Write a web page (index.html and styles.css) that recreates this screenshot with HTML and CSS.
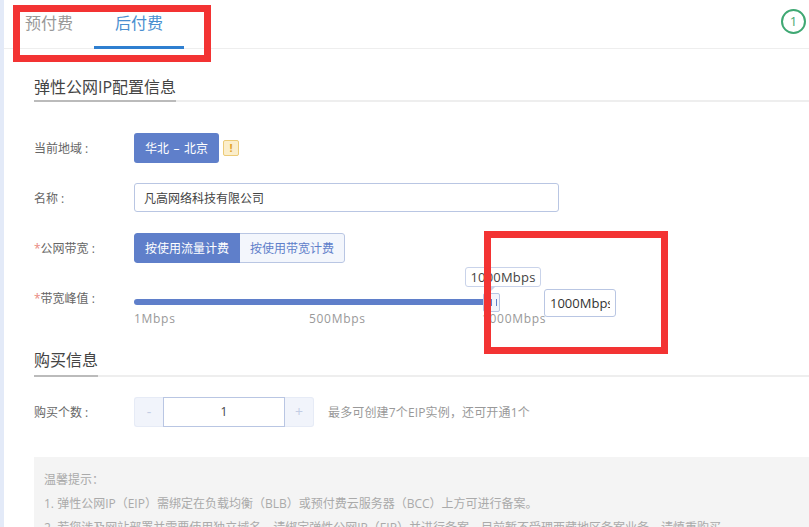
FILE: index.html
```html
<!DOCTYPE html>
<html lang="zh-CN">
<head>
<meta charset="utf-8">
<title>弹性公网IP</title>
<link rel="stylesheet" href="styles.css">
</head>
<body>
<main class="page">
  <header class="tabs">
    <a class="tab tab-first">预付费</a>
    <a class="tab tab-active">后付费</a>
    <span class="step">1</span>
  </header>
  <div class="content">
    <h2 class="section-title"><span>弹性公网IP配置信息</span></h2>
    <div class="row row-region">
      <label class="label">当前地域 :</label>
      <span class="btn btn-primary region">华北 – 北京</span>
      <span class="warn">!</span>
    </div>
    <div class="row row-name">
      <label class="label">名称 :</label>
      <div class="input name-input">凡高网络科技有限公司</div>
    </div>
    <div class="row row-billing">
      <label class="label"><i class="star">*</i>公网带宽 :</label>
      <div class="btn-group">
        <span class="btn btn-primary">按使用流量计费</span>
        <span class="btn btn-plain">按使用带宽计费</span>
      </div>
    </div>
    <div class="row row-slider">
      <label class="label"><i class="star">*</i>带宽峰值 :</label>
      <div class="slider">
        <div class="track"></div>
        <span class="tooltip">1000Mbps</span>
        <span class="tooltip-arrow"></span>
        <span class="thumb"></span>
        <div class="marks">
          <span>1Mbps</span><span>500Mbps</span><span>1000Mbps</span>
        </div>
      </div>
      <div class="input slider-input"><span>1000Mbps</span></div>
    </div>
    <h2 class="section-title title-buy"><span>购买信息</span></h2>
    <div class="row row-qty">
      <label class="label">购买个数 :</label>
      <div class="stepper">
        <span class="step-btn step-left">-</span>
        <span class="step-value">1</span>
        <span class="step-btn step-right">+</span>
      </div>
      <span class="hint">最多可创建7个EIP实例，还可开通1个</span>
    </div>
    <section class="notice">
      <p>温馨提示：</p>
      <p>1. 弹性公网IP（EIP）需绑定在负载均衡（BLB）或预付费云服务器（BCC）上方可进行备案。</p>
      <p>2. 若您涉及网站部署并需要使用独立域名，请绑定弹性公网IP（EIP）并进行备案，目前暂不受理西藏地区备案业务，请慎重购买。</p>
    </section>
  </div>
</main>
<div class="mark mark-tabs"></div>
<div class="mark mark-slider"></div>
</body>
</html>
```

FILE: styles.css
```css
* { box-sizing: border-box; }
html, body { margin: 0; height: 527px; overflow: hidden; background: #fff; }
body {
  font-family: "Open Sans", "Noto Sans CJK SC", sans-serif;
  font-size: 12px;
  color: #555;
  position: relative;
  width: 809px;
}
.page { border-left: 4px solid #e3eaf8; height: 527px; overflow: hidden; }
.tabs {
  height: 49px;
  border-bottom: 1px solid #eeeeee;
  display: flex;
  gap: 21px;
  padding-left: 21px;
  position: relative;
}
.tab {
  width: 90px;
  height: 49px;
  padding-top: 11px;
  font-size: 16px;
  line-height: 24px;
  text-align: center;
  color: #999;
}
.tab-first { width: 48px; }
.tab-active {
  color: #4a8fd0;
  border-bottom: 3px solid #2f7fd0;
}
.step {
  position: absolute;
  right: 3px;
  top: 9px;
  width: 25px;
  height: 25px;
  border: 2px solid #3fa873;
  border-radius: 50%;
  color: #3fa873;
  font-size: 13px;
  line-height: 21px;
  text-align: center;
}
.content { padding-left: 30px; }
.section-title {
  margin: 26px 0 0;
  height: 27px;
  font-size: 16px;
  font-weight: 400;
  line-height: 24px;
  color: #444;
  border-bottom: 2px solid #eeeeee;
  white-space: nowrap;
}
.section-title span {
  display: inline-block;
  height: 27px;
  border-bottom: 2px solid #bbbbbb;
}
.title-buy { margin-top: 0; height: 29px; }
.title-buy span { height: 29px; }
.row { display: flex; align-items: center; }
.label { width: 100px; color: #666; flex: none; font-size: 12px; white-space: nowrap; }
.star { color: #e98a80; font-style: normal; }
.row-region { margin-top: 31px; height: 30px; }
.row-name { margin-top: 20px; height: 30px; }
.row-billing { margin-top: 20px; height: 30px; }
.row-slider { margin-top: 20px; height: 65px; align-items: flex-start; }
.row-slider .label { padding-top: 6px; }
.btn {
  display: inline-flex;
  align-items: center;
  justify-content: center;
  height: 30px;
  font-size: 12px;
}
.btn-primary { background: #5f7fca; color: #fff; }
.region { width: 85px; border-radius: 3px; word-spacing: 1.5px; }
.warn {
  width: 16px;
  height: 16px;
  margin-left: 4px;
  background: #fbeecb;
  border: 1px solid #eccb78;
  border-radius: 2px;
  color: #e2a32c;
  font-weight: 700;
  font-size: 11px;
  line-height: 14px;
  text-align: center;
}
.input {
  height: 29px;
  border: 1px solid #b9c6e3;
  border-radius: 3px;
  background: #fff;
  color: #444;
  padding-left: 9px;
  display: flex;
  align-items: center;
}
.name-input { width: 425px; align-self: flex-start; }
.btn-group { display: flex; border-radius: 3px; overflow: hidden; }
.btn-group .btn { width: 105px; }
.btn-group .btn-plain {
  background: #f3f6fc;
  color: #5f7fca;
  border: 1px solid #b9c6e3;
  border-left: 0;
  border-radius: 0 3px 3px 0;
}
.btn-group .btn-primary { width: 106px; border-radius: 3px 0 0 3px; }
.slider { position: relative; width: 354px; height: 60px; flex: none; }
.track {
  position: absolute;
  left: 0;
  top: 16px;
  width: 354px;
  height: 6px;
  background: #5f7fca;
  border-radius: 3px;
}
.thumb {
  position: absolute;
  left: 349px;
  top: 10px;
  width: 17px;
  height: 19px;
  background: #f3f6fc;
  border: 1px solid #b9c6e3;
  border-radius: 2px;
}
.thumb::after {
  content: "";
  position: absolute;
  left: 7px;
  top: 5px;
  width: 4px;
  height: 7px;
  border-left: 1px solid #5f7fca;
  border-right: 1px solid #5f7fca;
}
.tooltip {
  position: absolute;
  left: 331px;
  top: -16px;
  width: 76px;
  height: 20px;
  background: #fff;
  border: 1px solid #c9d3ea;
  border-radius: 3px;
  font-size: 13px;
  line-height: 18px;
  text-align: center;
  color: #444;
  letter-spacing: .2px;
}
.tooltip-arrow {
  position: absolute;
  left: 351px;
  top: 4px;
  border: 5px solid transparent;
  border-top-color: #c9d3ea;
  border-bottom: 0;
}
.marks {
  position: absolute;
  left: 0;
  top: 28px;
  color: #999;
  font-size: 12px;
  line-height: 16px;
  letter-spacing: .7px;
  display: grid;
  grid-template-columns: 175px 173px auto;
  white-space: nowrap;
}
.slider-input {
  width: 72px;
  height: 28px;
  margin-left: 56px;
  margin-top: 6px;
  font-size: 13px;
  padding: 0 0 0 5px;
  overflow: hidden;
  white-space: nowrap;
  color: #333;
}
.slider-input span { display: block; width: 60px; overflow: hidden; }
.row-qty { margin-top: 20px; height: 30px; }
.stepper { display: flex; height: 30px; width: 180px; flex: none; }
.step-btn {
  width: 29px;
  background: #f1f4fb;
  color: #c3cde4;
  font-size: 14px;
  line-height: 28px;
  text-align: center;
  border: 1px solid #e6ebf6;
}
.step-left { border-radius: 3px 0 0 3px; border-right: 0; }
.step-right { border-radius: 0 3px 3px 0; border-left: 0; }
.step-value {
  width: 122px;
  border: 1px solid #b9c6e3;
  line-height: 28px;
  text-align: center;
  color: #444;
}
.hint { margin-left: 14px; color: #999; white-space: nowrap; letter-spacing: .15px; }
.notice {
  margin-top: 30px;
  height: 100px;
  background: #f4f4f4;
  padding: 11px 0 0 10px;
  color: #aaa;
  font-size: 12px;
  white-space: nowrap;
  overflow: hidden;
}
.notice p { margin: 0; height: 24px; line-height: 24px; }
.mark { position: absolute; border: 7px solid #f33333; pointer-events: none; }
.mark-tabs { left: 13px; top: 5px; width: 198px; height: 57px; }
.mark-slider { left: 484px; top: 231px; width: 184px; height: 123px; }
```
